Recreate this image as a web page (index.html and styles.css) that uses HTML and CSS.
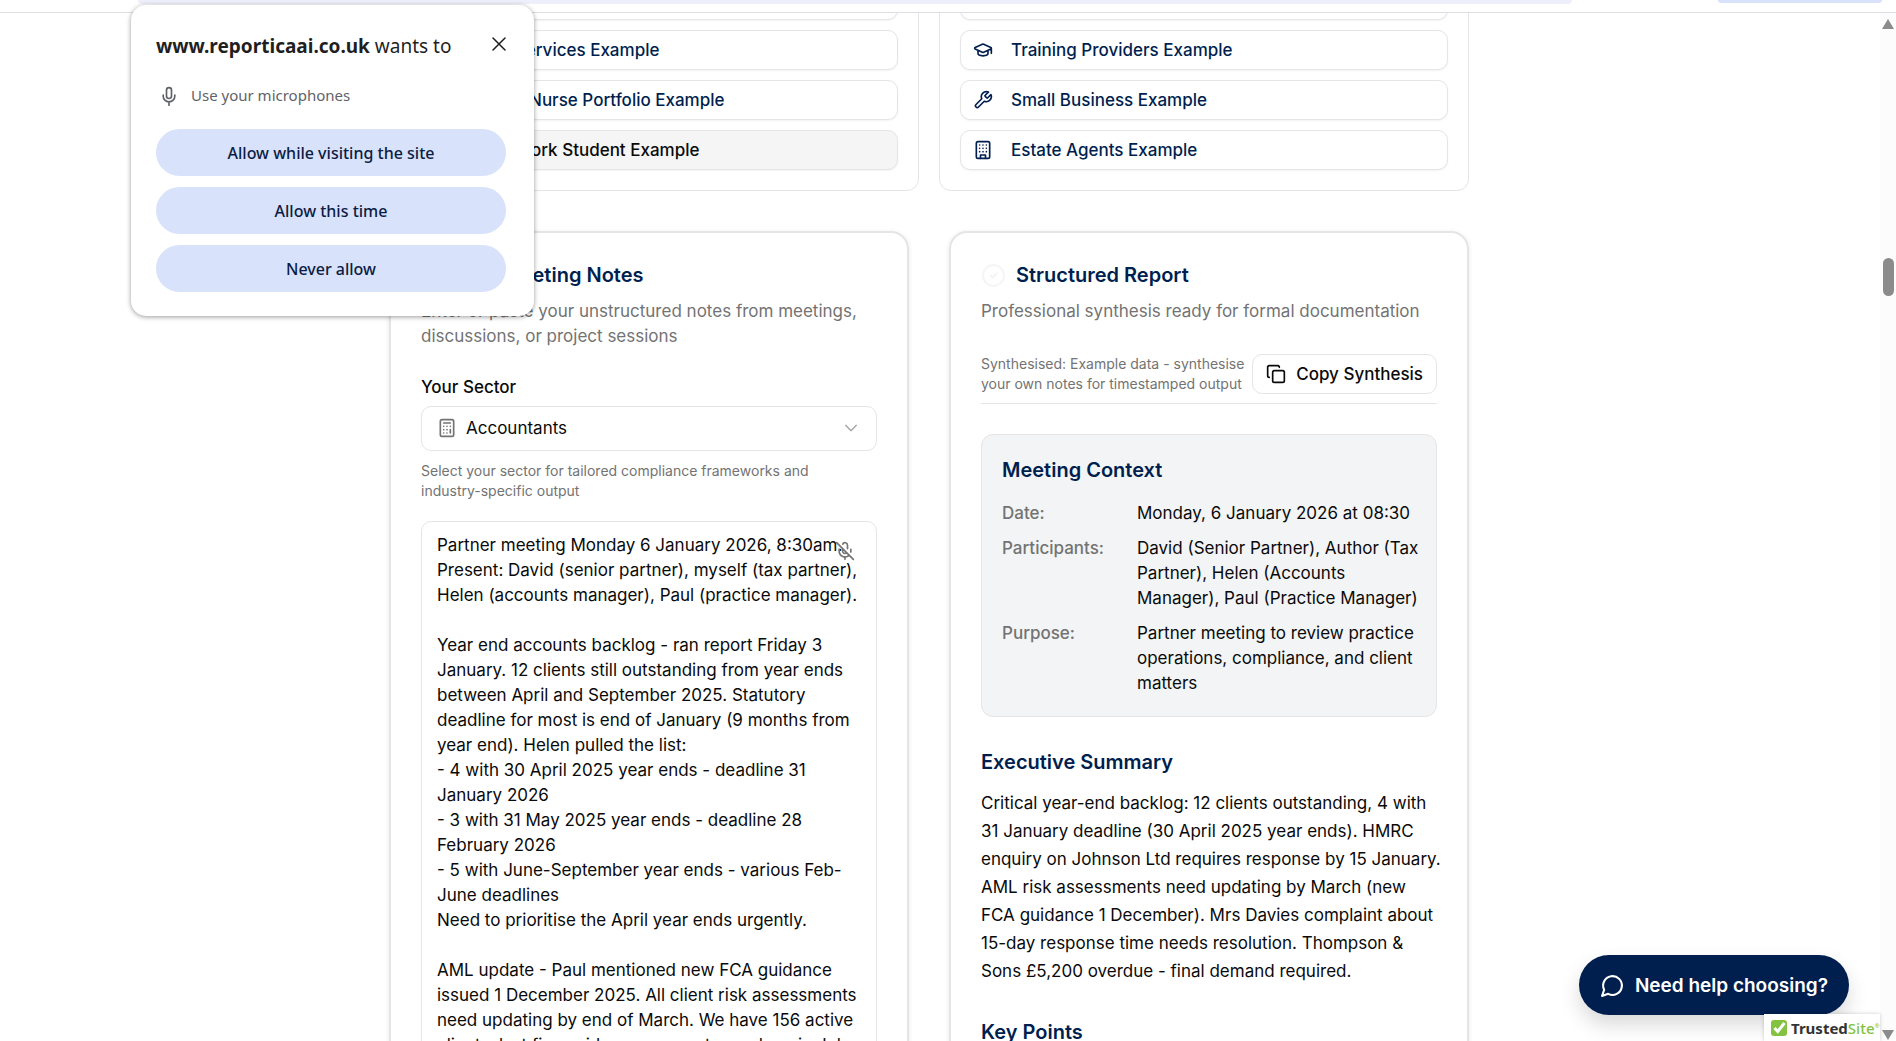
FILE: index.html
```html
<!DOCTYPE html>
<html lang="en">
<head>
<meta charset="utf-8">
<title>Reportica AI - Examples</title>
<link rel="stylesheet" href="styles.css">
</head>
<body>
<div class="toolbar"><span class="omnibox"></span><span class="profile-pill"></span></div>
<div class="viewport">
  <main class="page">
    <section class="examples">
      <div class="example-group">
        <button class="example" type="button" aria-label="Example"></button>
        <button class="example" type="button"><svg class="icon" viewBox="0 0 24 24"><circle cx="12" cy="12" r="9"/></svg>Social Services Example</button>
        <button class="example" type="button"><svg class="icon" viewBox="0 0 24 24"><circle cx="12" cy="12" r="9"/></svg>Student Nurse Portfolio Example</button>
        <button class="example active" type="button"><svg class="icon" viewBox="0 0 24 24"><circle cx="12" cy="12" r="9"/></svg>Social Work Student Example</button>
      </div>
      <div class="example-group">
        <button class="example" type="button" aria-label="Example"></button>
        <button class="example" type="button"><svg class="icon" viewBox="0 0 24 24"><path d="M21.4 10.9a1 1 0 0 0 0-1.8L12.8 5.2a2 2 0 0 0-1.6 0L2.6 9.1a1 1 0 0 0 0 1.8l8.6 3.9a2 2 0 0 0 1.6 0zM22 10v6M6 12.5V16c0 1.7 2.7 3 6 3s6-1.3 6-3v-3.5"/></svg>Training Providers Example</button>
        <button class="example" type="button"><svg class="icon" viewBox="0 0 24 24"><path d="M14.7 6.3a1 1 0 0 0 0 1.4l1.6 1.6a1 1 0 0 0 1.4 0l3.77-3.77a6 6 0 0 1-7.94 7.94l-6.91 6.91a2.12 2.12 0 0 1-3-3l6.91-6.91a6 6 0 0 1 7.94-7.94l-3.76 3.76z"/></svg>Small Business Example</button>
        <button class="example" type="button"><svg class="icon" viewBox="0 0 24 24"><rect x="4" y="2" width="16" height="20" rx="2"/><path d="M9 22v-4h6v4M8 6h.01M12 6h.01M16 6h.01M8 10h.01M12 10h.01M16 10h.01M8 14h.01M12 14h.01M16 14h.01"/></svg>Estate Agents Example</button>
      </div>
    </section>
    <section class="workspace">
      <article class="card">
        <h2 class="card-title"><svg class="icon title-icon" viewBox="0 0 24 24"><circle cx="12" cy="12" r="10"/></svg>Raw Meeting Notes</h2>
        <p class="lead">Enter or paste your unstructured notes from meetings,<br>discussions, or project sessions</p>
        <label class="label" for="sector">Your Sector</label>
        <div class="select-wrap">
          <svg class="icon select-icon" viewBox="0 0 24 24"><rect x="4" y="2" width="16" height="20" rx="2"/><path d="M8 6h8M16 14v4M16 10h.01M12 10h.01M8 10h.01M12 14h.01M8 14h.01M12 18h.01M8 18h.01"/></svg>
          <select class="select" id="sector"><option>Accountants</option></select>
          <svg class="icon chevron" viewBox="0 0 24 24"><path d="m4 8 8 8 8-8"/></svg>
        </div>
        <p class="hint">Select your sector for tailored compliance frameworks and<br>industry-specific output</p>
        <div class="notes-wrap">
          <textarea class="notes" aria-label="Meeting notes" spellcheck="false">Partner meeting Monday 6 January 2026, 8:30am.
Present: David (senior partner), myself (tax partner),
Helen (accounts manager), Paul (practice manager).

Year end accounts backlog - ran report Friday 3
January. 12 clients still outstanding from year ends
between April and September 2025. Statutory
deadline for most is end of January (9 months from
year end). Helen pulled the list:
- 4 with 30 April 2025 year ends - deadline 31
January 2026
- 3 with 31 May 2025 year ends - deadline 28
February 2026
- 5 with June-September year ends - various Feb-
June deadlines
Need to prioritise the April year ends urgently.

AML update - Paul mentioned new FCA guidance
issued 1 December 2025. All client risk assessments
need updating by end of March. We have 156 active
clients, last firm-wide assessment was done in July</textarea>
          <button class="mic" type="button" aria-label="Dictate"><svg class="icon" viewBox="0 0 24 24"><path d="M2 2l20 20M18.9 13.2A7 7 0 0 0 19 12v-2M5 10v2a7 7 0 0 0 12 5M15 9.3V5a3 3 0 0 0-5.7-1.3M9 9v3a3 3 0 0 0 5.1 2.1M12 19v3"/></svg></button>
        </div>
      </article>
      <article class="card">
        <h2 class="card-title"><svg class="icon title-icon faint" viewBox="0 0 24 24"><circle cx="12" cy="12" r="10"/><path d="m9 12 2 2 4-4"/></svg>Structured Report</h2>
        <p class="lead">Professional synthesis ready for formal documentation</p>
        <div class="report-bar">
          <p class="stamp">Synthesised: Example data - synthesise<br>your own notes for timestamped output</p>
          <button class="copy" type="button"><svg class="icon" viewBox="0 0 24 24"><rect x="8" y="8" width="14" height="14" rx="2"/><path d="M4 16c-1.1 0-2-.9-2-2V4c0-1.1.9-2 2-2h10c1.1 0 2 .9 2 2"/></svg>Copy Synthesis</button>
        </div>
        <section class="context">
          <h3 class="heading">Meeting Context</h3>
          <dl class="facts">
            <dt>Date:</dt><dd>Monday, 6 January 2026 at 08:30</dd>
            <dt>Participants:</dt><dd>David (Senior Partner), Author (Tax<br>Partner), Helen (Accounts<br>Manager), Paul (Practice Manager)</dd>
            <dt>Purpose:</dt><dd>Partner meeting to review practice<br>operations, compliance, and client<br>matters</dd>
          </dl>
        </section>
        <section class="block">
          <h3 class="heading">Executive Summary</h3>
          <p class="prose">Critical year-end backlog: 12 clients outstanding, 4 with<br>31 January deadline (30 April 2025 year ends). HMRC<br>enquiry on Johnson Ltd requires response by 15 January.<br>AML risk assessments need updating by March (new<br>FCA guidance 1 December). Mrs Davies complaint about<br>15-day response time needs resolution. Thompson &amp;<br>Sons £5,200 overdue - final demand required.</p>
        </section>
        <section class="block">
          <h3 class="heading">Key Points</h3>
        </section>
      </article>
    </section>
  </main>
  <div class="scrollbar"><span class="arrow up"></span><span class="thumb"></span><span class="arrow down"></span></div>
</div>
<button class="help" type="button"><svg class="icon" viewBox="0 0 24 24"><path d="M7.9 20A9 9 0 1 0 4 16.1L2 22Z"/></svg>Need help choosing?</button>
<div class="trusted"><svg class="trusted-mark" viewBox="0 0 18 18"><rect x="1" y="1" width="16" height="16" rx="3"/><path d="m4.5 9 3.2 3.500L14.500 4"/></svg><span class="trusted-name">Trusted<span class="trusted-site">Site<sup class="reg">®</sup></span></span></div>
<div class="prompt" role="dialog" aria-label="Microphone permission">
  <div class="prompt-head">
    <p class="prompt-title"><strong>www.reporticaai.co.uk</strong> wants to</p>
    <button class="close" type="button" aria-label="Close"><svg class="icon" viewBox="0 0 14 14"><path d="M1 1l12 12M13 1 1 13"/></svg></button>
  </div>
  <p class="prompt-ask"><svg class="icon" viewBox="0 0 24 24"><rect x="9" y="2" width="6" height="13" rx="3"/><path d="M5 11v1a7 7 0 0 0 14 0v-1M12 19v4"/></svg>Use your microphones</p>
  <div class="prompt-actions">
    <button class="choice" type="button">Allow while visiting the site</button>
    <button class="choice" type="button">Allow this time</button>
    <button class="choice" type="button">Never allow</button>
  </div>
</div>
</body>
</html>
```
FILE: styles.css
```css
* { box-sizing: border-box; margin: 0; }
:root {
  --navy: #001f4f;
  --ink: #0a0a0a;
  --muted: #737373;
  --line: #e5e5e5;
}
body {
  height: 100vh;
  overflow: hidden;
  display: flex;
  flex-direction: column;
  background: #fff;
  color: var(--ink);
  font: 17px/25px Inter, "Liberation Sans", sans-serif;
}
button, select, textarea { font: inherit; color: inherit; }
.icon {
  width: 20px;
  height: 20px;
  flex: none;
  fill: none;
  stroke: currentColor;
  stroke-width: 2;
  stroke-linecap: round;
  stroke-linejoin: round;
}

/* Browser toolbar edge */
.toolbar {
  flex: none;
  height: 13px;
  padding: 0 14px 0 138px;
  display: flex;
  justify-content: space-between;
  border-bottom: 1px solid #dcdfe3;
}
.omnibox { flex: 1; height: 4px; margin-right: 146px; background: #eeeffa; border-radius: 0 0 10px 10px; }
.profile-pill { width: 164px; height: 3px; background: #d8e2fa; border-radius: 0 0 20px 20px; }

.viewport { flex: 1; min-height: 0; display: flex; overflow: hidden; }
.page { flex: 1; padding-right: 22px; overflow: hidden; }
.scrollbar {
  width: 16px;
  padding: 6px 2px 0;
  display: flex;
  flex-direction: column;
  align-items: center;
  background: #fcfcfc;
}
.arrow { border: 6px solid transparent; }
.up { border-top: 0; border-bottom: 10px solid #8b8b8b; }
.thumb { width: 11px; height: 38px; margin-top: 229px; border-radius: 6px; background: #8b8b8b; }
.down { border-bottom: 0; border-top: 10px solid #8b8b8b; margin: auto 0 1px; }

/* Example pickers */
.examples, .workspace {
  max-width: 1080px;
  margin: 0 auto;
  display: grid;
  grid-template-columns: repeat(2, minmax(0, 1fr));
}
.examples { gap: 20px; margin-top: -54px; }
.example-group {
  padding: 20px;
  display: flex;
  flex-direction: column;
  gap: 10px;
  border: 1px solid var(--line);
  border-radius: 12px;
}
.example {
  height: 40px;
  padding: 0 12px;
  display: flex;
  align-items: center;
  gap: 18px;
  background: #fff;
  border: 1px solid var(--line);
  border-radius: 10px;
  box-shadow: 0 1px 2px rgba(0, 0, 0, .05);
  color: var(--navy);
  font-weight: 500;
}
.active { background: #f5f5f5; color: var(--ink); }

/* Notes and report */
.workspace { gap: 40px; margin-top: 40px; align-items: start; }
.card {
  padding: 30px;
  border: 2px solid var(--line);
  border-radius: 18px;
  box-shadow: 0 1px 4px rgba(0, 0, 0, .1);
}
.card-title {
  display: flex;
  align-items: center;
  gap: 10px;
  color: var(--navy);
  font-size: 20px;
  font-weight: 600;
  line-height: 25px;
}
.title-icon { width: 25px; height: 25px; }
.faint { color: #f5f5f5; }
.lead { margin-top: 11px; color: var(--muted); }
.label { display: block; margin-top: 26px; font-weight: 500; }
.select-wrap { position: relative; margin-top: 6px; }
.select {
  width: 100%;
  height: 45px;
  padding: 0 44px;
  appearance: none;
  background: #fff;
  border: 1px solid var(--line);
  border-radius: 10px;
}
.select-icon { position: absolute; left: 16px; top: 12px; color: var(--muted); }
.chevron { position: absolute; right: 18px; top: 14px; width: 16px; height: 16px; color: #a3a3a3; }
.hint, .stamp { color: var(--muted); font-size: 14px; line-height: 20px; }
.hint { margin-top: 10px; }
.notes-wrap { position: relative; margin-top: 20px; }
.notes {
  display: block;
  width: 100%;
  height: 800px;
  padding: 11px 15px;
  border: 1px solid var(--line);
  border-radius: 10px;
  background: #fff;
  white-space: pre;
  overflow: hidden;
  resize: none;
}
.mic {
  position: absolute;
  top: 20px;
  right: 22px;
  padding: 0;
  border: 0;
  background: none;
  line-height: 0;
  color: var(--muted);
}

.report-bar {
  margin-top: 30px;
  padding-bottom: 9px;
  display: flex;
  align-items: center;
  justify-content: space-between;
  border-bottom: 1px solid var(--line);
}
.stamp { white-space: nowrap; }
.copy {
  height: 40px;
  padding: 0 13px;
  display: flex;
  align-items: center;
  gap: 10px;
  white-space: nowrap;
  background: #fff;
  border: 1px solid var(--line);
  border-radius: 10px;
  font-weight: 500;
}
.context {
  margin-top: 30px;
  padding: 20px;
  background: #f2f4f5;
  border: 1px solid var(--line);
  border-radius: 12px;
}
.heading { color: var(--navy); font-size: 20px; font-weight: 600; line-height: 30px; }
.facts {
  margin-top: 16px;
  display: grid;
  grid-template-columns: 125px 1fr;
  gap: 10px;
}
.facts dt { color: var(--muted); font-weight: 500; }
.facts dd { white-space: nowrap; }
.block { margin-top: 30px; }
.block + .block { margin-top: 32px; }
.prose { margin-top: 12px; line-height: 28px; white-space: nowrap; }

/* Floating widgets */
.help {
  position: absolute;
  right: 47px;
  bottom: 26px;
  height: 60px;
  padding: 0 21px;
  display: flex;
  align-items: center;
  gap: 10px;
  border: 0;
  border-radius: 30px;
  background: var(--navy);
  color: #fff;
  font-size: 19px;
  font-weight: 600;
  white-space: nowrap;
  box-shadow: 0 10px 20px rgba(0, 0, 0, .15);
}
.help .icon { width: 25px; height: 25px; }
.trusted {
  position: absolute;
  right: 16px;
  bottom: 0;
  width: 116px;
  height: 27px;
  padding-left: 6px;
  display: flex;
  align-items: center;
  gap: 3px;
  background: #fff;
  box-shadow: 0 0 4px rgba(0, 0, 0, .2);
  font: 700 15px/20px "Noto Sans", "Open Sans", sans-serif;
  color: #333;
}
.trusted-mark { width: 18px; height: 18px; flex: none; fill: #83c341; }
.trusted-mark path { fill: none; stroke: #fff; stroke-width: 3; }
.trusted-site { color: #83c341; font-weight: 500; }
.reg { font-size: 6px; line-height: 6px; }

.prompt {
  position: absolute;
  left: 131px;
  top: 5px;
  width: 403px;
  padding: 26px 28px 24px 25px;
  background: #fff;
  border-radius: 15px;
  box-shadow: 0 1px 5px rgba(0, 0, 0, .4);
  color: #1f1f1f;
  font-family: "Noto Sans", "Open Sans", sans-serif;
}
.prompt-head { display: flex; align-items: flex-start; justify-content: space-between; }
.prompt-title { font-size: 19px; line-height: 30px; white-space: nowrap; }
.close { padding: 6px 0; border: 0; background: none; line-height: 0; }
.close .icon { width: 14px; height: 14px; stroke-width: 1.5; }
.prompt-ask {
  margin-top: 22px;
  padding-left: 3px;
  display: flex;
  align-items: center;
  gap: 12px;
  color: #5f6368;
  font-size: 15px;
}
.prompt-actions { margin-top: 21px; display: grid; gap: 11px; }
.choice {
  height: 47px;
  padding: 2px 0 0;
  border: 0;
  border-radius: 24px;
  background: #d8e2fa;
  color: #0b1c44;
  font-size: 16px;
  font-weight: 500;
}
```
